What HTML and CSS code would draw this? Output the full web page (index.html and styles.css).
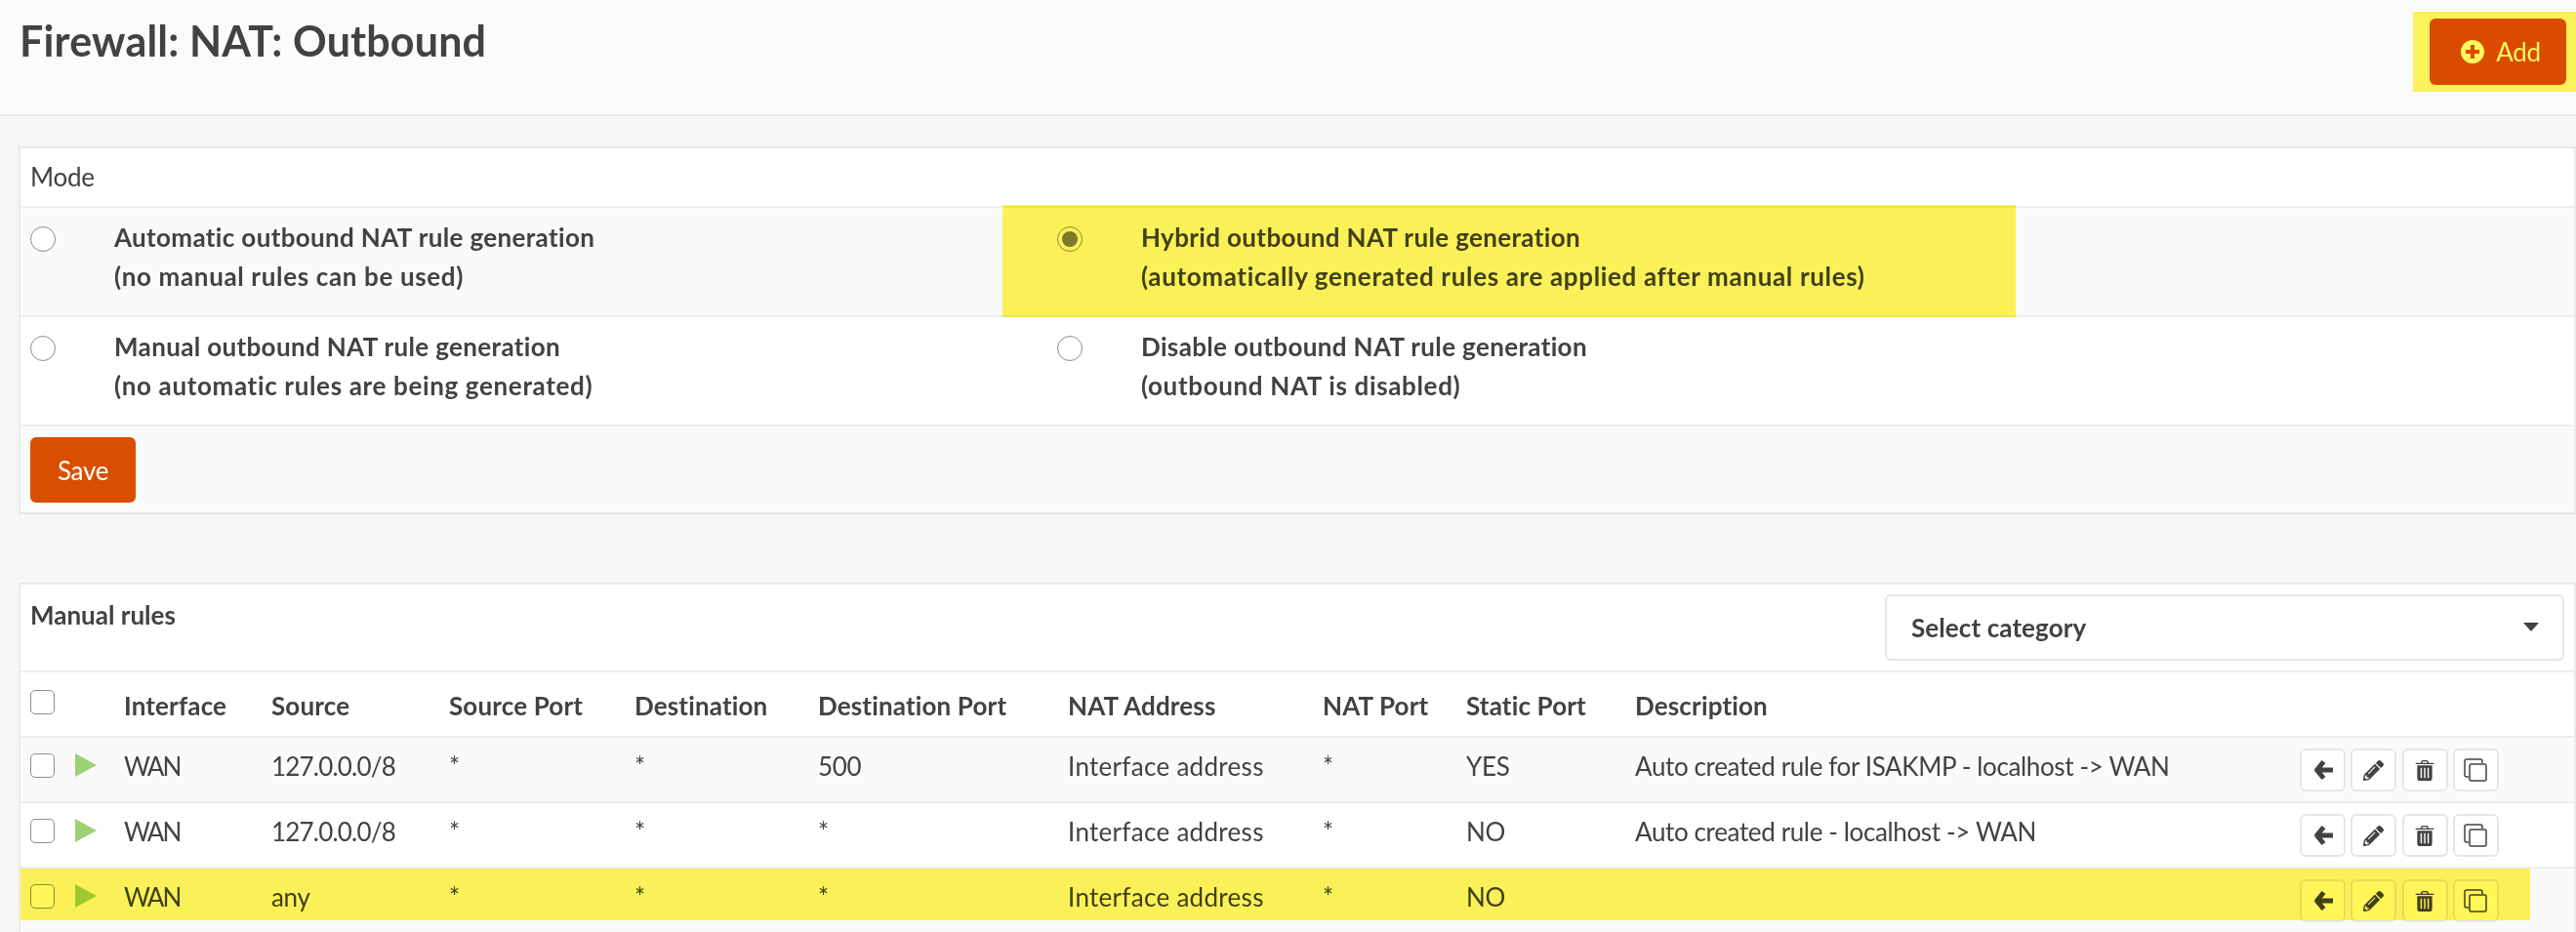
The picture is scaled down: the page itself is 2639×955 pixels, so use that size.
FILE: index.html
```html
<!DOCTYPE html>
<html lang="en">
<head>
    <meta charset="UTF-8">
    <title>Firewall: NAT: Outbound</title>
    <link rel="stylesheet" href="styles.css">
</head>
<body>
    <header class="page-header">
        <h1>Firewall: NAT: Outbound</h1>
        <div class="add-wrap">
            <button class="btn-orange btn-add">
                <svg class="icon-plus" viewBox="0 0 24 24"><path fill="currentColor" fill-rule="evenodd" d="M12 0a12 12 0 1 0 0 24 12 12 0 0 0 0-24zM10 5h4v5h5v4h-5v5h-4v-5H5v-4h5z"/></svg>
                Add
            </button>
            <span class="marker"></span>
        </div>
    </header>

    <form class="panel mode-panel">
        <div class="panel-title">Mode</div>
        <div class="mode-row shaded">
            <label class="mode-option">
                <input type="radio" name="mode">
                <span>Automatic outbound NAT rule generation<br><span class="mode-note">(no manual rules can be used)</span></span>
            </label>
            <label class="mode-option">
                <input type="radio" name="mode" checked>
                <span>Hybrid outbound NAT rule generation<br><span class="mode-note">(automatically generated rules are applied after manual rules)</span></span>
                <span class="marker marker-hybrid"></span>
            </label>
        </div>
        <div class="mode-row">
            <label class="mode-option">
                <input type="radio" name="mode">
                <span>Manual outbound NAT rule generation<br><span class="mode-note">(no automatic rules are being generated)</span></span>
            </label>
            <label class="mode-option">
                <input type="radio" name="mode">
                <span>Disable outbound NAT rule generation<br><span class="mode-note">(outbound NAT is disabled)</span></span>
            </label>
        </div>
        <div class="save-row shaded">
            <button type="button" class="btn-orange btn-save">Save</button>
        </div>
    </form>

    <section class="panel rules-panel">
        <div class="rules-head">
            <div class="rules-title">Manual rules</div>
            <div class="category-select">Select category<span class="caret"></span></div>
        </div>
        <table class="rules-table">
            <colgroup>
                <col class="c-check"><col class="c-play"><col class="c-iface"><col class="c-src"><col class="c-sport"><col class="c-dst"><col class="c-dport"><col class="c-nat"><col class="c-nport"><col class="c-static"><col class="c-desc"><col class="c-act">
            </colgroup>
            <thead>
                <tr>
                    <th><input type="checkbox"></th>
                    <th></th>
                    <th>Interface</th>
                    <th>Source</th>
                    <th>Source Port</th>
                    <th>Destination</th>
                    <th>Destination Port</th>
                    <th>NAT Address</th>
                    <th>NAT Port</th>
                    <th>Static Port</th>
                    <th>Description</th>
                    <th></th>
                </tr>
            </thead>
            <tbody>
                <tr class="shaded">
                    <td><input type="checkbox"></td>
                    <td><svg class="icon-play" viewBox="0 0 22 24"><path d="M0 0l22 12L0 24z"/></svg></td>
                    <td class="td-iface">WAN</td>
                    <td class="td-src">127.0.0.0/8</td>
                    <td>*</td>
                    <td>*</td>
                    <td>500</td>
                    <td class="td-nat">Interface address</td>
                    <td>*</td>
                    <td>YES</td>
                    <td class="td-desc">Auto created rule for ISAKMP - localhost -&gt; WAN</td>
                    <td>
                        <div class="actions">
                            <a class="act"><svg viewBox="0 0 20 22" class="i-arrow"><use href="#arrow"/></svg></a>
                            <a class="act"><svg viewBox="0 0 512 512" class="i-pencil"><use href="#pencil"/></svg></a>
                            <a class="act"><svg viewBox="0 0 20 22" class="i-trash"><use href="#trash"/></svg></a>
                            <a class="act"><svg viewBox="0 0 24 24" class="i-clone"><use href="#clone"/></svg></a>
                        </div>
                    </td>
                </tr>
                <tr>
                    <td><input type="checkbox"></td>
                    <td><svg class="icon-play" viewBox="0 0 22 24"><path d="M0 0l22 12L0 24z"/></svg></td>
                    <td class="td-iface">WAN</td>
                    <td class="td-src">127.0.0.0/8</td>
                    <td>*</td>
                    <td>*</td>
                    <td>*</td>
                    <td class="td-nat">Interface address</td>
                    <td>*</td>
                    <td>NO</td>
                    <td class="td-desc">Auto created rule - localhost -&gt; WAN</td>
                    <td>
                        <div class="actions">
                            <a class="act"><svg viewBox="0 0 20 22" class="i-arrow"><use href="#arrow"/></svg></a>
                            <a class="act"><svg viewBox="0 0 512 512" class="i-pencil"><use href="#pencil"/></svg></a>
                            <a class="act"><svg viewBox="0 0 20 22" class="i-trash"><use href="#trash"/></svg></a>
                            <a class="act"><svg viewBox="0 0 24 24" class="i-clone"><use href="#clone"/></svg></a>
                        </div>
                    </td>
                </tr>
                <tr class="shaded">
                    <td><input type="checkbox"></td>
                    <td><svg class="icon-play" viewBox="0 0 22 24"><path d="M0 0l22 12L0 24z"/></svg></td>
                    <td class="td-iface">WAN</td>
                    <td>any</td>
                    <td>*</td>
                    <td>*</td>
                    <td>*</td>
                    <td class="td-nat">Interface address</td>
                    <td>*</td>
                    <td>NO</td>
                    <td></td>
                    <td>
                        <div class="actions">
                            <a class="act"><svg viewBox="0 0 20 22" class="i-arrow"><use href="#arrow"/></svg></a>
                            <a class="act"><svg viewBox="0 0 512 512" class="i-pencil"><use href="#pencil"/></svg></a>
                            <a class="act"><svg viewBox="0 0 20 22" class="i-trash"><use href="#trash"/></svg></a>
                            <a class="act"><svg viewBox="0 0 24 24" class="i-clone"><use href="#clone"/></svg></a>
                        </div>
                    </td>
                </tr>
            </tbody>
        </table>
        <span class="marker marker-row"></span>
    </section>

    <!-- icons used by the action buttons -->
    <svg class="sprites">
        <symbol id="arrow" viewBox="0 0 20 22"><path fill="none" stroke="currentColor" stroke-width="5" stroke-linejoin="round" d="M10.500 2.500L3.500 11l7 8.500M4 11h16"/></symbol>
        <symbol id="pencil" viewBox="0 0 512 512"><path d="M497.9 142.1l-46.1 46.1c-4.7 4.7-12.3 4.7-17 0l-111-111c-4.7-4.7-4.7-12.3 0-17l46.1-46.1c18.7-18.7 49.1-18.7 67.9 0l60.1 60.1c18.8 18.7 18.8 49.1 0 67.9zM284.2 99.8L21.6 362.4.4 483.9c-2.9 16.4 11.4 30.6 27.8 27.8l121.5-21.3 262.6-262.6c4.7-4.7 4.7-12.3 0-17l-111-111c-4.8-4.7-12.4-4.7-17.1 0zM124.1 339.9c-5.5-5.5-5.5-14.3 0-19.8l154-154c5.5-5.5 14.3-5.5 19.8 0s5.5 14.3 0 19.8l-154 154c-5.500 5.500-14.3 5.500-19.8 0zM88 424h48v36.3l-64.5 11.3-31.1-31.1L51.7 376H88v48z"/></symbol>
        <symbol id="trash" viewBox="0 0 20 22"><path fill-rule="evenodd" d="M6 3V2a2 2 0 0 1 2-2h4a2 2 0 0 1 2 2v1h6v1.300H0V3zm1.500 0h5V2a.6.6 0 0 0-.6-.6H8.100a.6.6 0 0 0-.6.6zM2 5.500h16V19a3 3 0 0 1-3 3H5a3 3 0 0 1-3-3zM5.500 8v11h1.500V8zm3.800 0v11h1.500V8zm3.700 0v11h1.500V8z"/></symbol>
        <symbol id="clone" viewBox="0 0 24 24"><path fill="none" stroke="currentColor" stroke-width="1.500" d="M19 5V3a2 2 0 0 0-2-2H3a2 2 0 0 0-2 2v14a2 2 0 0 0 2 2h2"/><rect x="6" y="6" width="17" height="17" rx="1.500" fill="none" stroke="currentColor" stroke-width="1.500"/></symbol>
    </svg>
</body>
</html>
```

FILE: styles.css
```css
html, body {
    height: 955px;
    overflow: hidden;
}
body {
    margin: 0;
    background-color: #f6f6f6;
    color: #424242;
    font-family: "Lato", "Noto Sans", sans-serif;
    font-size: 26px;
    letter-spacing: -0.3px;
}
.page-header {
    display: flex;
    justify-content: space-between;
    height: 117px;
    background-color: #fbfbfb;
    border-bottom: 2px solid #ececec;
}
h1 {
    margin: 12px 0 0 20px;
    font-size: 43px;
    font-weight: 700;
    line-height: 60px;
    letter-spacing: 0.18px;
}
.add-wrap {
    position: relative;
    padding: 19px 10px 0 17px;
}
.btn-orange {
    border: none;
    border-radius: 6px;
    background-color: #d94f00;
    color: #fff;
    font: inherit;
    letter-spacing: inherit;
}
.btn-add {
    display: flex;
    align-items: center;
    justify-content: center;
    gap: 12px;
    width: 140px;
    height: 68px;
    padding-left: 12px;
}
.icon-plus {
    width: 24px;
    height: 24px;
}
.marker {
    position: absolute;
    background-color: #fff65a;
    mix-blend-mode: multiply;
    pointer-events: none;
}
.add-wrap .marker {
    top: 12px;
    left: 0;
    width: 167px;
    height: 82px;
}
.panel {
    margin-left: 19px;
    border: 2px solid #ebebeb;
    background-color: #fff;
}
.mode-panel {
    margin-top: 31px;
    border-bottom-color: #e4e4e4;
}
.panel-title {
    height: 59px;
    padding-left: 10px;
    line-height: 59px;
    border-bottom: 2px solid #ededed;
}
.shaded {
    background-color: #fafafa;
}
.mode-row {
    display: flex;
    height: 110px;
    border-bottom: 2px solid #ededed;
}
.mode-option {
    position: relative;
    display: flex;
    width: 1052px;
    padding: 10px 0 0 10px;
    box-sizing: border-box;
    font-weight: 700;
    line-height: 40px;
    letter-spacing: 0.35px;
}
.mode-note {
    letter-spacing: 0.65px;
}
.mode-option input {
    appearance: none;
    flex: none;
    width: 26px;
    height: 26px;
    margin: 9px 60px 0 0;
    border: 1px solid #8d8d8d;
    border-radius: 50%;
    background-color: #fff;
}
.mode-option input:checked {
    background-color: #7c7c7c;
    background-clip: content-box;
    padding: 4px;
    box-sizing: border-box;
}
.marker-hybrid {
    top: -3px;
    left: -46px;
    width: 1038px;
    height: 115px;
}
.save-row {
    height: 88px;
    padding: 10px;
    box-sizing: border-box;
}
.btn-save {
    width: 108px;
    height: 67px;
    margin-top: 1px;
}
.rules-panel {
    position: relative;
    margin-top: 70px;
    border-bottom: none;
}
.rules-head {
    display: flex;
    justify-content: space-between;
    height: 88px;
    border-bottom: 2px solid #ededed;
}
.rules-title {
    padding: 11px 0 0 10px;
    line-height: 40px;
    font-weight: 700;
    letter-spacing: 0;
}
.category-select {
    position: relative;
    width: 696px;
    height: 68px;
    margin: 10px 10px 0 0;
    padding-left: 25px;
    box-sizing: border-box;
    border: 2px solid #e6e6e6;
    border-radius: 6px;
    font-weight: 700;
    line-height: 64px;
    letter-spacing: 0.1px;
}
.caret {
    position: absolute;
    top: 27px;
    right: 24px;
    border-top: 9px solid #424242;
    border-left: 8px solid transparent;
    border-right: 8px solid transparent;
}
.rules-table {
    width: 2616px;
    table-layout: fixed;
    border-collapse: collapse;
}
.c-check { width: 45px; }
.c-play { width: 51px; }
.c-iface { width: 151px; }
.c-src { width: 182px; }
.c-sport { width: 190px; }
.c-dst { width: 188px; }
.c-dport { width: 256px; }
.c-nat { width: 261px; }
.c-nport { width: 147px; }
.c-static { width: 173px; }
.c-desc { width: 681px; }
.c-act { width: 291px; }
.rules-table th, .rules-table td {
    padding: 0 0 0 10px;
    text-align: left;
    border-bottom: 2px solid #ededed;
    white-space: nowrap;
}
.rules-table th {
    height: 66px;
    padding-top: 3px;
    box-sizing: border-box;
    font-weight: 700;
    letter-spacing: 0.15px;
}
.rules-table td {
    height: 67px;
    padding-bottom: 7px;
    box-sizing: border-box;
}
.rules-table .td-iface { letter-spacing: -2px; }
.rules-table .td-src { letter-spacing: -0.8px; }
.rules-table .td-nat { letter-spacing: 0.3px; }
.rules-table .td-desc { letter-spacing: -0.37px; }
.rules-table input {
    appearance: none;
    display: block;
    width: 25px;
    height: 25px;
    margin: 0;
    border: 1px solid #8d8d8d;
    border-radius: 5px;
    background-color: #fff;
}
.rules-table th input {
    margin-top: -8px;
}
.rules-table td input {
    margin-top: -1px;
}
.icon-play {
    display: block;
    width: 22px;
    height: 24px;
    margin: -2px 0 0 1px;
    fill: #9dd274;
}
.actions {
    display: flex;
    gap: 5.3px;
    margin-top: 8px;
}
.act {
    display: flex;
    align-items: center;
    justify-content: center;
    width: 47px;
    height: 44px;
    box-sizing: border-box;
    border: 2px solid #e6e6e6;
    border-radius: 6px;
    background-color: #fff;
}
.act svg {
    fill: #424242;
    color: #424242;
}
.i-arrow { width: 20px; height: 22px; }
.i-pencil { width: 21px; height: 21px; }
.i-trash { width: 20px; height: 21px; }
.i-clone { width: 24px; height: 24px; }
.marker-row {
    top: 291px;
    left: 0;
    width: 2571px;
    height: 53px;
}
.sprites {
    display: none;
}
```
